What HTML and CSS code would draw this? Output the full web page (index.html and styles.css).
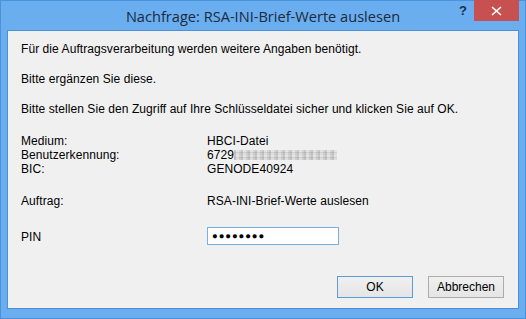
FILE: index.html
```html
<!DOCTYPE html>
<html lang="de">
<head>
<meta charset="utf-8">
<title>Nachfrage</title>
<link rel="stylesheet" href="styles.css">
</head>
<body>
<div class="window">
  <div class="titlebar">
    <div class="title">Nachfrage: RSA-INI-Brief-Werte auslesen</div>
    <div class="help">?</div>
    <div class="close">
      <svg width="11" height="10" viewBox="0 0 11 10"><path d="M1 1 L10 9 M10 1 L1 9" stroke="#fff" stroke-width="1.6"/></svg>
    </div>
  </div>
  <div class="client">
    <p class="line first">Für die Auftragsverarbeitung werden weitere Angaben benötigt.</p>
    <p class="line">Bitte ergänzen Sie diese.</p>
    <p class="line">Bitte stellen Sie den Zugriff auf Ihre Schlüsseldatei sicher und klicken Sie auf OK.</p>
    <div class="info">
      <span>Medium:</span><span>HBCI-Datei</span>
      <span>Benutzerkennung:</span><span>6729<span class="blur"></span></span>
      <span>BIC:</span><span>GENODE40924</span>
    </div>
    <div class="info single">
      <span>Auftrag:</span><span>RSA-INI-Brief-Werte auslesen</span>
    </div>
    <div class="info pinrow">
      <span>PIN</span><span class="pin">●●●●●●●●</span>
    </div>
    <div class="buttons">
      <button class="btn default">OK</button>
      <button class="btn">Abbrechen</button>
    </div>
  </div>
</div>
</body>
</html>
```
FILE: styles.css
```css
html, body { margin: 0; padding: 0; }
body { width: 526px; height: 319px; overflow: hidden; background: #fff; }
.window {
  box-sizing: border-box;
  width: 526px; height: 319px;
  background: #6aaef0;
  border: 1px solid #4b92dc;
  display: flex; flex-direction: column;
}
.titlebar {
  height: 29px;
  display: flex; align-items: flex-start;
  position: relative;
}
.title {
  position: absolute; left: 0; right: 0; top: 5px;
  text-align: center;
  font-family: "Open Sans", sans-serif;
  font-size: 14.6px;
  color: #1b2b3b;
}
.help {
  position: absolute; left: 458px; top: 2px;
  font-family: "Liberation Sans", sans-serif;
  font-weight: bold; font-size: 13px; color: #17304a;
}
.close {
  position: absolute; left: 473px; top: -1px;
  width: 45px; height: 21px;
  background: #c75050;
  display: flex; align-items: center; justify-content: center;
}
.client {
  margin: 0 6px 9px 6px;
  flex: 1;
  background: #f0f0f0;
  border: 1px solid #4a90d9;
  padding: 11px 0 0 13px;
  font-family: "Liberation Sans", Arial, sans-serif;
  font-size: 12px;
  letter-spacing: 0.07px;
  line-height: 14px;
  color: #000;
  display: flex; flex-direction: column;
}
.line { margin: 0 0 16px 0; }
.line.first { margin-bottom: 16px; }
.info {
  display: grid;
  grid-template-columns: 186px auto;
  margin-top: 2px;
}
.info.single { margin-top: 18px; }
.info.pinrow { margin-top: 21px; align-items: center; }
.blur {
  display: inline-block;
  width: 103px; height: 10px;
  vertical-align: -1px;
  background:
    repeating-linear-gradient(90deg, rgba(150,150,150,.35) 0 2px, rgba(230,230,230,.4) 2px 5px, rgba(180,180,180,.3) 5px 7px),
    repeating-linear-gradient(0deg, #d8d8d8 0 2px, #c4c4c4 2px 3px, #e2e2e2 3px 5px);
}
.pin {
  box-sizing: border-box;
  width: 132px; height: 18px;
  border: 1px solid #7aafe3;
  background: #fff;
  font-size: 9.5px;
  letter-spacing: 0.9px;
  line-height: 16px;
  padding-left: 4px;
  margin-top: -2px;
}
.buttons {
  margin-top: auto;
  margin-bottom: 10px;
  margin-right: 14px;
  display: flex; justify-content: flex-end; gap: 15px;
}
.btn {
  box-sizing: border-box;
  width: 76px; height: 22px;
  font-family: "Liberation Sans", Arial, sans-serif;
  font-size: 12px;
  color: #000;
  background: linear-gradient(#f0f0f0, #e5e5e5);
  border: 1px solid #acacac;
  padding: 0;
}
.btn.default { border-color: #5a9bdc; }
```
